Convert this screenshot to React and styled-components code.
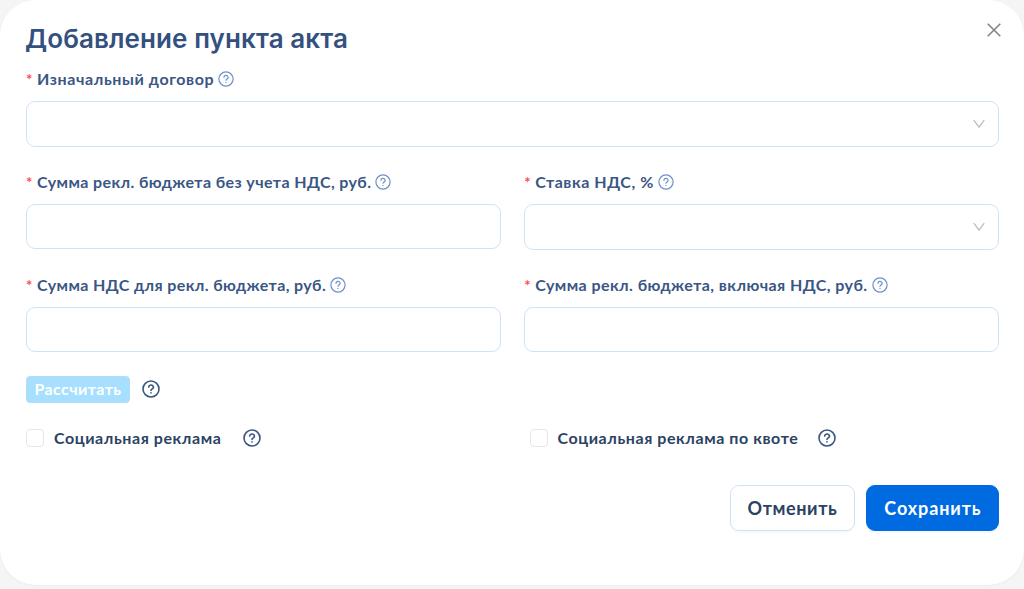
import React from "react";
import styled, { createGlobalStyle } from "styled-components";

const HelpIcon = ({ size = 16, dark, gap }) => (
  <HelpSvg
    $gap={gap}
    width={size}
    height={size}
    viewBox="0 0 18 18"
    fill="none"
    stroke={dark ? "#3b5582" : "#6f90c8"}
    strokeWidth={dark ? 1.6 : 1.35}
    strokeLinecap="round"
    strokeLinejoin="round"
  >
    <circle cx="9" cy="9" r="8" />
    <path d="M6.7 7.1a2.35 2.1 0 1 1 3.5 1.8c-.8.45-1.2.8-1.2 1.5" />
    <path d="M9 12.9v.1" />
  </HelpSvg>
);

const Chevron = () => (
  <svg width="12" height="10" viewBox="0 0 12 10" fill="none" stroke="#bdbdbd" strokeWidth="1.3">
    <path d="M.8 1.2 6 8.1l5.2-6.9" />
  </svg>
);

const Field = ({ label, spacing, select }) => (
  <FieldBox>
    <Label>
      <Star>*</Star>
      <LabelText $spacing={spacing}>{label}</LabelText>
      <HelpIcon gap={4} />
    </Label>
    {select ? (
      <SelectBox role="combobox" aria-label={label}>
        <Chevron />
      </SelectBox>
    ) : (
      <Input aria-label={label} />
    )}
  </FieldBox>
);

const App = () => {
  return (
    <>
      <GlobalStyle />
      <Modal>
        <Head>
          <Title>Добавление пункта акта</Title>
          <CloseButton aria-label="Закрыть">
            <svg width="14" height="14" viewBox="0 0 14 14" stroke="#858585" strokeWidth="1.6">
              <path d="M.7.7l12.6 12.6M13.3.7.7 13.3" />
            </svg>
          </CloseButton>
        </Head>
        <Form>
          <Field label="Изначальный договор" spacing={0.6} select />
          <Row>
            <Field label="Сумма рекл. бюджета без учета НДС, руб." spacing={0.39} />
            <Field label="Ставка НДС, %" spacing={0.55} select />
          </Row>
          <Row>
            <Field label="Сумма НДС для рекл. бюджета, руб." spacing={0.39} />
            <Field label="Сумма рекл. бюджета, включая НДС, руб." spacing={0.43} />
          </Row>
        </Form>
        <CalcRow>
          <CalcButton>Рассчитать</CalcButton>
          <HelpIcon size={18} dark gap={11.5} />
        </CalcRow>
        <Checks>
          <CheckLabel>
            <CheckBox />
            <CheckText $width={168}>Социальная реклама</CheckText>
            <HelpIcon size={18} dark gap={20.5} />
          </CheckLabel>
          <CheckLabel>
            <CheckBox />
            <CheckText $width={240}>Социальная реклама по квоте</CheckText>
            <HelpIcon size={18} dark gap={20.5} />
          </CheckLabel>
        </Checks>
        <Footer>
          <Button $width={125} $spacing={0.6}>
            Отменить
          </Button>
          <Button $width={133} $spacing={0.9} $primary>
            Сохранить
          </Button>
        </Footer>
      </Modal>
    </>
  );
};

export default App;

const GlobalStyle = createGlobalStyle`
  * {
    box-sizing: border-box;
  }
  body {
    margin: 0;
    height: 589px;
    overflow: hidden;
    background: #f5f5f5;
    font-family: "Lato", "Noto Sans", sans-serif;
  }
  button, input {
    font-family: inherit;
  }
`;

const Modal = styled.div`
  height: 585px;
  padding: 19px 24.6px 0 26px;
  background: white;
  border-radius: 36px;
  box-shadow: 0 1px 3px rgba(0, 0, 0, 0.04);
`;

const Head = styled.div`
  display: flex;
  justify-content: space-between;
  height: 48px;
`;

const Title = styled.h1`
  margin: 0 0 0 -1px;
  font-family: "Inter", sans-serif;
  font-size: 26px;
  font-weight: 600;
  line-height: 39px;
  letter-spacing: 0.1px;
  color: #34507e;
  white-space: nowrap;
`;

const CloseButton = styled.button`
  display: flex;
  width: 14px;
  height: 14px;
  margin: 4px -1.6px 0 0;
  padding: 0;
  border: none;
  background: none;
  cursor: pointer;
`;

const Form = styled.div`
  display: flex;
  flex-direction: column;
  gap: 23px;
`;

const Row = styled.div`
  display: grid;
  grid-template-columns: 1fr 1fr;
  gap: 23px;
  height: 80px;
`;

const FieldBox = styled.div`
  display: flex;
  flex-direction: column;
  gap: 10px;
`;

const Label = styled.div`
  display: flex;
  align-items: center;
  height: 24px;
  color: #3a5684;
`;

const Star = styled.span`
  width: 11px;
  font-size: 15px;
  font-weight: 700;
  line-height: 20px;
  color: #ff4d4f;
`;

const LabelText = styled.span`
  font-size: 16px;
  font-weight: 700;
  line-height: 20px;
  letter-spacing: ${(props) => props.$spacing}px;
  white-space: nowrap;
`;

const HelpSvg = styled.svg`
  flex: none;
  margin-left: ${(props) => props.$gap}px;
`;

const SelectBox = styled.div`
  display: flex;
  align-items: center;
  justify-content: flex-end;
  height: 46px;
  padding-right: 13.4px;
  border: 1px solid #cfe3f8;
  border-radius: 9px;
`;

const Input = styled.input`
  width: 100%;
  height: 45px;
  padding: 0 14px;
  border: 1px solid #cfe3f8;
  border-radius: 9px;
  outline: none;
`;

const CalcRow = styled.div`
  display: flex;
  align-items: center;
  height: 27px;
  margin-top: 23px;

  svg {
    margin-bottom: 1px;
  }
`;

const CalcButton = styled.button`
  width: 104px;
  height: 27px;
  padding: 0 0 2px;
  border: 1px solid #b3dcf5;
  border-radius: 4px;
  background: #a6dfff;
  color: white;
  font-size: 16px;
  font-weight: 700;
  letter-spacing: 0.4px;
`;

const Checks = styled.div`
  display: grid;
  grid-template-columns: 503.5px 1fr;
  margin-top: 25px;
`;

const CheckLabel = styled.div`
  display: flex;
  align-items: center;
  height: 20px;
`;

const CheckBox = styled.span`
  width: 18px;
  height: 18px;
  margin-right: 10px;
  border: 1px solid #e6e6e6;
  border-radius: 4px;
`;

const CheckText = styled.span`
  width: ${(props) => props.$width}px;
  font-size: 16px;
  font-weight: 700;
  line-height: 20px;
  letter-spacing: 0.57px;
  color: #2b4263;
  white-space: nowrap;
`;

const Footer = styled.div`
  display: flex;
  justify-content: flex-end;
  gap: 11.5px;
  margin-top: 37px;
`;

const Button = styled.button`
  width: ${(props) => props.$width}px;
  height: 46px;
  padding: 0;
  border: 1px solid ${(props) => (props.$primary ? "#006be0" : "#cfe3f8")};
  border-radius: 9px;
  background: ${(props) => (props.$primary ? "#006be0" : "white")};
  color: ${(props) => (props.$primary ? "white" : "#2b4263")};
  font-size: 18px;
  font-weight: 700;
  letter-spacing: ${(props) => props.$spacing}px;
  box-shadow: 0 2px 2px rgba(0, 80, 160, 0.04);
`;
